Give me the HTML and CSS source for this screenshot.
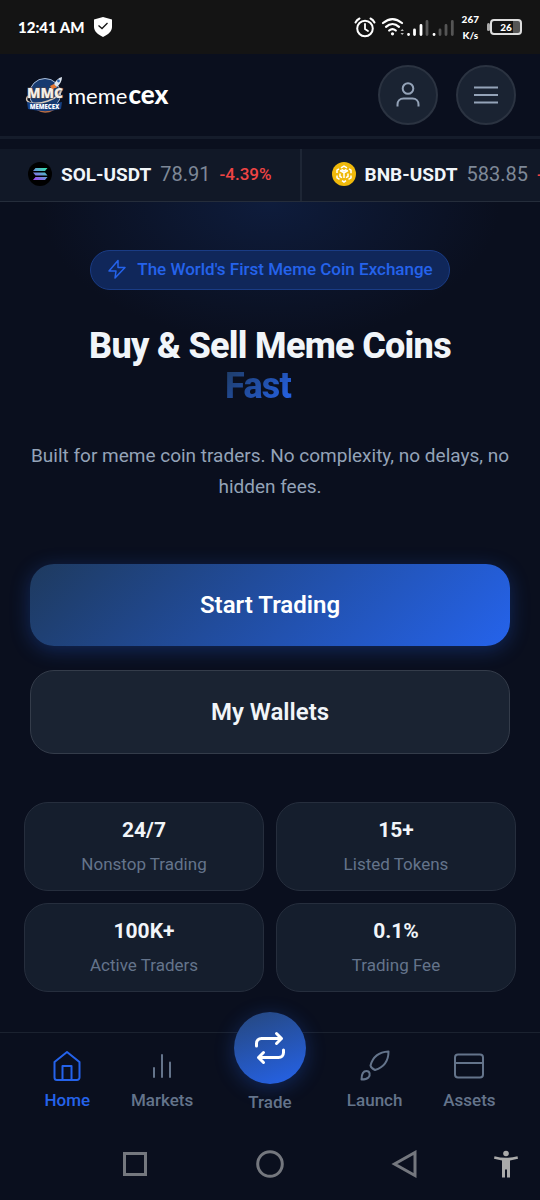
FILE: index.html
```html
<!DOCTYPE html>
<html lang="en">
<head>
<meta charset="utf-8">
<meta name="viewport" content="width=device-width, initial-scale=1">
<title>MemeCEX</title>
<link rel="stylesheet" href="styles.css">
</head>
<body>
<div class="app">
  <div class="status">
    <div class="status-group">
      <span class="clock">12:41 AM</span>
      <svg class="shield" width="20" height="22" viewBox="0 0 20 22"><path d="M10 1 19 3.500V11c0 4.500-4 7.500-9 10-5-2.500-9-5.500-9-10V3.500Z" fill="#fff"/><path d="m5.500 9.500 3.500 3 5.500-5.500" fill="none" stroke="#141414" stroke-width="1.300"/></svg>
    </div>
    <div class="status-group status-right">
      <svg width="100" height="24" viewBox="0 0 100 24" fill="none" stroke="#fff" stroke-linecap="round">
        <circle cx="11" cy="13.500" r="7.800" stroke-width="2"/><path d="M11 9v5l3 2" stroke-width="1.800"/><path d="M1.500 7.500c1-2 2.500-3.300 4-4M20.500 7.500c-1-2-2.500-3.300-4-4" stroke-width="2"/>
        <path d="M29 8c6-5 13-5 19 0M32 11.800c4-3.500 9-3.500 13 0M35.200 15.500c2-1.800 4.500-1.800 6.600 0" stroke-width="2.200"/><circle cx="38.500" cy="18.800" r="1.600" fill="#fff" stroke="none"/>
        <g fill="#bbb" stroke="none"><path d="m46.500 16 1.700-2 1.700 2ZM46.500 18l1.700 2 1.700-2Z"/></g>
        <g stroke-width="2.800"><path d="M54.500 19.500h.1M60.500 19.500v-4.500M67 19.500v-9M80 19.500h.1"/><path d="M73 19.500v-13M86 19.500v-4.500M92 19.500v-9M98.300 19.500v-13" stroke="#555"/></g>
      </svg>
      <span class="speed">267<br>K/s</span>
      <span class="battery"><span>26</span></span>
    </div>
  </div>

  <header class="header">
    <a class="brand" href="#">
      <svg width="40" height="38" viewBox="0 0 40 38">
        <circle cx="21" cy="18" r="15.500" fill="#173a70" stroke="#a9bdd8" stroke-width="1"/>
        <path d="M9 27c3 12 21 12 25 0" fill="#142c55" stroke="#b86e46" stroke-width="1.500"/>
        <path d="M4 20c-6 8 9 9 20 5 8-3 13-7 14-12" fill="none" stroke="#d5c7b9" stroke-width="1.500"/>
        <text x="21" y="22" class="mark-main">MMC</text>
        <path d="M30 9c1-4 4-7 8-8 0 4-2 7-5 10Z" fill="#dce5ef"/><circle cx="34.500" cy="5" r="1.400" fill="#2d65b0"/><path d="m30 8-4 2 2 3 5-1.500Z" fill="#e77932"/>
        <path d="M3 26q18 4 35 0l-1 7q-16 4-33 0Z" fill="#164184"/>
        <text x="20.500" y="33" class="mark-small">MEMECEX</text>
      </svg>
      <span class="wordmark">meme<b>cex</b></span>
    </a>
    <div class="header-actions">
      <button class="round" aria-label="Account"><svg width="30" height="30" viewBox="0 0 30 30"><circle cx="15" cy="8.500" r="5.300"/><path d="M4.500 26.500v-2c0-3.500 2.500-6 6-6h9c3.500 0 6 2.500 6 6v2"/></svg></button>
      <button class="round" aria-label="Menu"><svg width="30" height="30" viewBox="0 0 30 30"><path d="M3 7.500h24M3 15h24M3 22.500h24"/></svg></button>
    </div>
  </header>

  <div class="ticker">
    <div class="pair">
      <svg width="24" height="24" viewBox="0 0 24 24"><defs><linearGradient id="sol" gradientUnits="userSpaceOnUse" x1="17" y1="5" x2="8" y2="19"><stop stop-color="#31e7ad"/><stop offset=".5" stop-color="#6796d6"/><stop offset="1" stop-color="#a047f0"/></linearGradient></defs><circle cx="12" cy="12" r="12" fill="#000"/><path d="M7.500 6H19.500l-2.500 3H5ZM5 10.500h12l2.500 3h-12ZM7.500 15h12L17 18H5Z" fill="url(#sol)"/></svg>
      <strong>SOL-USDT</strong><span class="price">78.91</span><span class="change">-4.39%</span>
    </div>
    <div class="pair">
      <svg width="24" height="24" viewBox="0 0 24 24"><circle cx="12" cy="12" r="12" fill="#f0b90b"/><path d="m9 5.800 3-1.800 3 1.800M17 7l2 1.200v3M19 13.500v2.300L16.500 17.300M14 18.700l-2 1.300-2-1.300M7.500 17.300 5 15.800v-2.300M5 11V8.200L7 7M8 8.500l4 2.300 4-2.300M12 11v5M8 11.500v3l2 1.200M16 11.500v3l-2 1.200M9.500 7.500 12 9l2.500-1.500" fill="none" stroke="#fff" stroke-width="1.500"/></svg>
      <strong>BNB-USDT</strong><span class="price">583.85</span><span class="change">-2.18%</span>
    </div>
  </div>

  <main class="hero">
    <div class="badge">
      <svg width="20" height="20" viewBox="0 0 20 20"><path d="M11 1.500 2 12h7l-1 7L18 8.500h-7Z"/></svg>
      <span>The World's First Meme Coin Exchange</span>
    </div>
    <h1>Buy &amp; Sell Meme Coins<br><span class="accent">Fast</span></h1>
    <p class="lead">Built for meme coin traders. No complexity, no delays, no hidden fees.</p>
    <div class="actions">
      <button class="btn primary">Start Trading</button>
      <button class="btn secondary">My Wallets</button>
    </div>
    <div class="stats">
      <div class="stat"><strong>24/7</strong><span>Nonstop Trading</span></div>
      <div class="stat"><strong>15+</strong><span>Listed Tokens</span></div>
      <div class="stat"><strong>100K+</strong><span>Active Traders</span></div>
      <div class="stat"><strong>0.1%</strong><span>Trading Fee</span></div>
    </div>
  </main>

  <nav class="tabs">
    <a class="tab active" href="#"><svg width="32" height="32" viewBox="0 0 32 32"><path d="M3.500 12 16 2l12.500 10v15.500a2.500 2.500 0 0 1-2.500 2.500H6a2.500 2.500 0 0 1-2.500-2.500ZM11.500 30V16h9v14"/></svg><span>Home</span></a>
    <a class="tab" href="#"><svg width="32" height="32" viewBox="0 0 32 32"><path d="M8 18v9M16 5v22M24 12.500V27"/></svg><span>Markets</span></a>
    <a class="tab trade" href="#"><span class="orb"><svg width="36" height="36" viewBox="0 0 36 36"><path d="m24.500 3.500 5 5-5 5M4.500 16v-2.500c0-3 2-5 5-5h20M11.500 32.500l-5-5 5-5M31.500 20v2.500c0 3-2 5-5 5h-20"/></svg></span><span>Trade</span></a>
    <a class="tab" href="#"><svg width="32" height="32" viewBox="0 0 32 32"><path d="M29.500 1.500C19 2 13.500 8 11.500 15.500c.5 2 2 3.500 4.500 4.500C24 17.500 29.500 12 29.500 1.500ZM2.500 29.500C2.500 24 4 21 7.500 21c3.500 0 4 4 2 6.500-1.500 1.500-4 2-7 2Z"/></svg><span>Launch</span></a>
    <a class="tab" href="#"><svg width="32" height="32" viewBox="0 0 32 32"><rect x="2" y="4.500" width="28" height="23" rx="3"/><path d="M2 13h28"/></svg><span>Assets</span></a>
  </nav>

  <div class="sysnav">
    <button aria-label="Recent apps"><svg width="28" height="28" viewBox="0 0 28 28"><path d="M3.500 3.500h21v21h-21Z"/></svg></button>
    <button aria-label="Home screen"><svg width="28" height="28" viewBox="0 0 28 28"><circle cx="14" cy="14" r="12.300"/></svg></button>
    <button aria-label="Back"><svg width="28" height="28" viewBox="0 0 28 28"><path d="M24 2.500v23L3.500 14Z"/></svg></button>
    <button class="access" aria-label="Accessibility"><svg width="28" height="28" viewBox="0 0 28 28"><circle cx="14" cy="3.500" r="2.800"/><path d="M2.500 6.200C10 8.200 18 8.200 25.500 6.200L26 8.700l-8 1.800v17h-3v-8h-2v8h-3v-17L2 8.700Z"/></svg></button>
  </div>
</div>
</body>
</html>
```

FILE: styles.css
```css
* { box-sizing: border-box; }
body { margin: 0; background: #0a0f1e; color: #f1f5f9; font-family: Roboto, "Liberation Sans", sans-serif; }
button { font: inherit; color: inherit; padding: 0; border: 0; background: none; cursor: pointer; }
a { color: inherit; text-decoration: none; }
svg { display: block; flex: none; }
.app { min-height: 100vh; display: flex; flex-direction: column; overflow: hidden; }

.status { height: 54px; padding: 0 18px; background: #141414; display: flex; align-items: center; justify-content: space-between; color: #fff; font-family: Lato, sans-serif; }
.status-group { display: flex; align-items: center; gap: 8px; }
.clock { font-size: 15px; font-weight: 900; }
.speed { font-size: 10px; line-height: 16px; font-weight: 900; text-align: center; }
.battery { position: relative; width: 32px; height: 16px; margin-left: 3px; border: 2px solid #ddd; border-radius: 4px; background: linear-gradient(90deg, transparent 75%, #555 75%); display: flex; align-items: center; justify-content: center; font-size: 10px; font-weight: 900; }
.battery::before { content: ""; position: absolute; left: -5px; top: 2px; width: 3px; height: 8px; background: #aaa; border-radius: 2px; }

.header { height: 85px; padding: 0 24px; border-bottom: 3px solid #151c2b; display: flex; align-items: center; justify-content: space-between; }
.brand { display: flex; align-items: center; gap: 4px; }
.wordmark { font: 400 22px/30px Lato, sans-serif; color: #fff; }
.wordmark b { font-weight: 900; font-size: 26px; margin-left: 1px; }
.mark-main { font: 900 14px "Open Sans", sans-serif; text-anchor: middle; fill: #f4eee8; stroke: #57463f; stroke-width: 1px; paint-order: stroke; }
.mark-small { font: 900 6px "Open Sans", sans-serif; text-anchor: middle; fill: #fff; }
.header-actions { display: flex; gap: 18px; }
.round { width: 60px; height: 60px; border: 2px solid #2b3341; border-radius: 50%; background: #1a2332; display: grid; place-items: center; }
.round svg { fill: none; stroke: #94a3b8; stroke-width: 2; }

.ticker { margin-top: 10px; height: 53px; background: #111827; border-bottom: 1px solid #252d3b; display: flex; overflow: hidden; }
.pair { flex: none; display: flex; align-items: center; padding: 0 28px 2px; gap: 9px; border-right: 2px solid #1e2635; white-space: nowrap; font-size: 19px; }
.pair + .pair { padding-left: 30px; }
.pair strong { font-weight: 700; }
.price { color: #7e8897; font-size: 20px; }
.change { color: #ef4444; font-size: 17px; font-weight: 500; }

.hero { flex: 1; padding: 48px 24px 40px; display: flex; flex-direction: column; align-items: center; text-align: center; background: radial-gradient(ellipse 230px 140px at 50% 0, #0e1c3c, #0a0f1e); }
.badge { height: 40px; padding: 0 16px 2px; border: 1px solid #1a3c85; border-radius: 20px; background: #10275a; color: #2563eb; display: flex; align-items: center; gap: 10px; font-size: 17px; font-weight: 500; white-space: nowrap; }
.badge svg { fill: none; stroke: currentColor; stroke-width: 1.5; stroke-linejoin: round; }
h1 { margin: 36px 0 0; font-size: 36px; line-height: 40px; font-weight: 800; letter-spacing: -0.02em; }
.accent { display: inline-block; min-width: 90px; text-align: left; color: transparent; background: linear-gradient(135deg, #1e3a5f, #2563eb 80%); background-clip: text; -webkit-background-clip: text; }
.lead { margin: 34px 0 0; font-size: 19px; line-height: 31px; color: #94a3b8; }
.actions { align-self: stretch; margin: 62px 6px 0; display: grid; gap: 24px; }
.btn { height: 82px; border-radius: 24px; font-size: 24px; font-weight: 600; }
.primary { background: linear-gradient(135deg, #1e3a5f, #2563eb); color: #fff; box-shadow: 0 4px 20px #2563eb4d; }
.secondary { height: 84px; background: #1a2332; border: 1px solid #343c4a; }
.stats { align-self: stretch; margin-top: 48px; display: grid; grid-template-columns: 1fr 1fr; gap: 12px; }
.stat { height: 89px; border: 1px solid #262e3d; border-radius: 24px; background: #151e2d; display: flex; flex-direction: column; align-items: center; justify-content: center; gap: 10px; }
.stat strong { font-size: 21px; line-height: 24px; font-weight: 700; }
.stat span { font-size: 17px; line-height: 24px; color: #64748b; }

.tabs { height: 96px; padding: 17px 24px 0; border-top: 1px solid #1b2230; display: flex; justify-content: space-around; align-items: flex-start; color: #64748b; font-size: 17px; line-height: 20px; font-weight: 500; }
.tab { display: flex; flex-direction: column; align-items: center; gap: 8px; }
.tab svg { fill: none; stroke: currentColor; stroke-width: 2; stroke-linecap: round; stroke-linejoin: round; }
.active { color: #2563eb; }
.orb { width: 72px; height: 72px; margin-top: -38px; border-radius: 50%; background: linear-gradient(160deg, #26477c, #2563eb); color: #fff; display: grid; place-items: center; box-shadow: 0 4px 20px #2563eb4d; }
.tab .orb svg { stroke-width: 3; }

.sysnav { position: relative; height: 72px; padding: 0 68px; display: grid; grid-template-columns: repeat(3, 1fr); place-items: center; }
.sysnav svg { fill: none; stroke: #74777e; stroke-width: 3; }
.access { position: absolute; right: 20px; top: 22px; }
.sysnav .access svg { fill: #aaa; stroke: none; }
```
